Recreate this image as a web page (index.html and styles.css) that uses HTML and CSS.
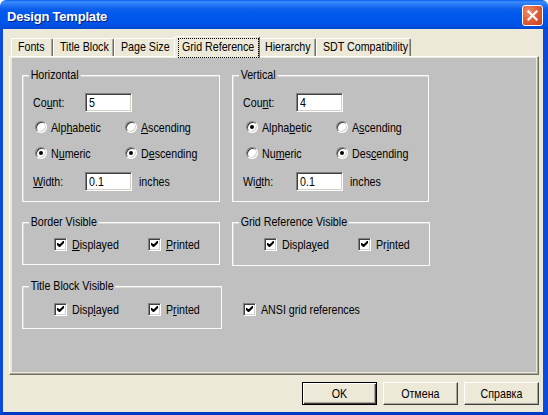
FILE: index.html
```html
<!DOCTYPE html>
<html>
<head>
<meta charset="utf-8">
<title>Design Template</title>
<link rel="stylesheet" href="styles.css">
</head>
<body>
<div class="window">
  <div class="titlebar">
    <span class="title">Design Template</span>
    <span class="close"><svg width="13" height="13" viewBox="0 0 13 13"><path d="M2.5 2.5 L10.5 10.5 M10.5 2.5 L2.5 10.5" stroke="#fff" stroke-width="2.2" stroke-linecap="square" fill="none"/></svg></span>
  </div>
  <div class="frame">
    <div class="client">
      <div class="tabs">
        <div class="tab t-fonts"><span class="tx">Fonts</span></div>
        <div class="tab t-title"><span class="tx">Title Block</span></div>
        <div class="tab t-page"><span class="tx">Page Size</span></div>
        <div class="tab active t-grid"><span class="focus"><span class="tx">Grid Reference</span></span></div>
        <div class="tab t-hier"><span class="tx">Hierarchy</span></div>
        <div class="tab t-sdt"><span class="tx">SDT Compatibility</span></div>
      </div>
      <div class="panel">
        <div class="page">
          <div class="group g-h">
            <span class="legend">Horizontal</span>
            <div class="field-row"><span class="lbl"><span class="tx">Co<u>u</u>nt:</span></span><span class="input"><span class="tx">5</span></span></div>
            <div class="radio-grid">
              <span class="ritem"><span class="radio"></span><span class="tx">Alp<u>h</u>abetic</span></span>
              <span class="ritem"><span class="radio"></span><span class="tx"><u>A</u>scending</span></span>
              <span class="ritem"><span class="radio on"></span><span class="tx">N<u>u</u>meric</span></span>
              <span class="ritem"><span class="radio on"></span><span class="tx">D<u>e</u>scending</span></span>
            </div>
            <div class="field-row width-row"><span class="lbl"><span class="tx"><u>W</u>idth:</span></span><span class="input"><span class="tx">0.1</span></span><span class="unit tx">inches</span></div>
          </div>
          <div class="group g-v">
            <span class="legend">Vertical</span>
            <div class="field-row"><span class="lbl"><span class="tx">Cou<u>n</u>t:</span></span><span class="input"><span class="tx">4</span></span></div>
            <div class="radio-grid">
              <span class="ritem"><span class="radio on"></span><span class="tx">Alpha<u>b</u>etic</span></span>
              <span class="ritem"><span class="radio"></span><span class="tx">A<u>s</u>cending</span></span>
              <span class="ritem"><span class="radio"></span><span class="tx">Nu<u>m</u>eric</span></span>
              <span class="ritem"><span class="radio on"></span><span class="tx">Des<u>c</u>ending</span></span>
            </div>
            <div class="field-row width-row"><span class="lbl"><span class="tx">Wi<u>d</u>th:</span></span><span class="input"><span class="tx">0.1</span></span><span class="unit tx">inches</span></div>
          </div>
          <div class="group checks g-bv">
            <span class="legend">Border Visible</span>
            <span class="citem"><span class="check"><svg width="7" height="7" viewBox="0 0 7 7"><path d="M0 2h1l1 1h1l3-3h1v2l-4 4h-1l-2-2z" fill="#000"/></svg></span><span class="tx"><u>D</u>isplayed</span></span>
            <span class="citem"><span class="check"><svg width="7" height="7" viewBox="0 0 7 7"><path d="M0 2h1l1 1h1l3-3h1v2l-4 4h-1l-2-2z" fill="#000"/></svg></span><span class="tx"><u>P</u>rinted</span></span>
          </div>
          <div class="group checks g-grv">
            <span class="legend">Grid Reference Visible</span>
            <span class="citem"><span class="check"><svg width="7" height="7" viewBox="0 0 7 7"><path d="M0 2h1l1 1h1l3-3h1v2l-4 4h-1l-2-2z" fill="#000"/></svg></span><span class="tx">Displa<u>y</u>ed</span></span>
            <span class="citem"><span class="check"><svg width="7" height="7" viewBox="0 0 7 7"><path d="M0 2h1l1 1h1l3-3h1v2l-4 4h-1l-2-2z" fill="#000"/></svg></span><span class="tx">Pr<u>i</u>nted</span></span>
          </div>
          <div class="group checks g-tbv">
            <span class="legend">Title Block Visible</span>
            <span class="citem"><span class="check"><svg width="7" height="7" viewBox="0 0 7 7"><path d="M0 2h1l1 1h1l3-3h1v2l-4 4h-1l-2-2z" fill="#000"/></svg></span><span class="tx">Disp<u>l</u>ayed</span></span>
            <span class="citem"><span class="check"><svg width="7" height="7" viewBox="0 0 7 7"><path d="M0 2h1l1 1h1l3-3h1v2l-4 4h-1l-2-2z" fill="#000"/></svg></span><span class="tx">P<u>r</u>inted</span></span>
          </div>
          <div class="ansi">
            <span class="citem"><span class="check"><svg width="7" height="7" viewBox="0 0 7 7"><path d="M0 2h1l1 1h1l3-3h1v2l-4 4h-1l-2-2z" fill="#000"/></svg></span><span class="tx">ANSI grid references</span></span>
          </div>
        </div>
      </div>
      <div class="buttons">
        <div class="btn default"><span class="tx">OK</span></div>
        <div class="btn"><span class="tx">Отмена</span></div>
        <div class="btn"><span class="tx">Справка</span></div>
      </div>
    </div>
  </div>
</div>
</body>
</html>
```

FILE: styles.css
```css
html, body {
  margin: 0;
  padding: 0;
}
body {
  width: 548px;
  height: 415px;
  overflow: hidden;
  background: #ffffff;
  font-family: "Liberation Sans", Arial, sans-serif;
  font-size: 13px;
  color: #000;
}
u { text-decoration: underline; text-underline-offset: 1px; }

/* narrow text: the dialog font is a condensed sans */
.tx {
  display: inline-block;
  transform: scaleX(0.82);
  transform-origin: 0 50%;
  white-space: nowrap;
}

.window {
  width: 548px;
  height: 415px;
  display: flex;
  flex-direction: column;
}

.titlebar {
  height: 29px;
  flex: none;
  display: flex;
  align-items: flex-start;
  justify-content: space-between;
  padding: 0 5px 0 7px;
  box-sizing: border-box;
  background: linear-gradient(180deg, #0A5FEF 0px, #3D8DFA 2px, #2A7BF6 4px, #0C5FEC 9px, #0058EE 14px, #0055EA 22px, #0050E2 26px, #0046D2 29px);
  border-radius: 6px 6px 0 0;
}
.title {
  color: #fff;
  font-weight: bold;
  font-size: 13px;
  letter-spacing: -0.2px;
  line-height: 29px;
  padding-top: 2px;
  text-shadow: 1px 1px 0 #0A1883;
}
.close {
  margin-top: 5px;
  width: 21px;
  height: 21px;
  box-sizing: border-box;
  border: 1px solid #fff;
  border-radius: 3px;
  background: radial-gradient(circle at 30% 30%, #F0906E 0%, #E0603A 45%, #C8401C 100%);
  display: flex;
  align-items: center;
  justify-content: center;
}
.close svg { display: block; }

.frame {
  flex: 1;
  display: flex;
  background: #0055E5;
  border-left: 3px solid #0A4BDD;
  border-right: 5px solid #0A4BDD;
  border-bottom: 3px solid #0039C2;
  box-sizing: border-box;
}
.client {
  flex: 1;
  background: #ECE9D8;
  padding: 7px 4px 7px 6px;
  display: flex;
  flex-direction: column;
}

/* tabs */
.tabs {
  height: 20px;
  display: flex;
  align-items: flex-end;
  padding-left: 2px;
  position: relative;
  z-index: 2;
}
.tab {
  box-sizing: border-box;
  height: 18px;
  border: 1px solid;
  border-color: #fff #716F64 transparent #fff;
  border-bottom: none;
  border-radius: 2px 2px 0 0;
  box-shadow: inset -1px 0 0 #ACA899;
  background: #ECE9D8;
  padding-left: 6px;
  line-height: 16px;
  white-space: nowrap;
  overflow: hidden;
}
.t-fonts { width: 42px; }
.t-title { width: 61px; }
.t-page { width: 62px; }
.t-grid { width: 86px; }
.t-hier { width: 58px; }
.t-sdt { width: 95px; }
.tab.active {
  height: 22px;
  margin: 0 -2px -2px -2px;
  padding: 1px 0 0 3px;
  position: relative;
  z-index: 3;
  line-height: 17px;
}
.focus {
  display: block;
  box-sizing: border-box;
  height: 20px;
  width: 81px;
  border: 1px dotted #000;
  padding-left: 3px;
  line-height: 16px;
}

/* panel */
.panel {
  box-sizing: border-box;
  height: 319px;
  border: 1px solid;
  border-color: #fff #716F64 #716F64 #fff;
  box-shadow: inset -1px -1px 0 #ACA899;
  background: #ECE9D8;
  padding: 1px 2px 2px 2px;
  position: relative;
  z-index: 1;
}
.page {
  height: 100%;
  background: #C0C0C0;
  box-sizing: border-box;
  padding: 17px 0 0 10px;
  display: grid;
  grid-template-columns: 210px auto;
  grid-template-rows: 127px 44px 43px;
  row-gap: 20px;
  align-items: start;
}

.group {
  position: relative;
  box-sizing: border-box;
  border: 1px solid #FAFAFA;
  box-shadow: inset 1px 1px 0 #D8D8D0;
}
.legend {
  position: absolute;
  top: -9px;
  left: 6px;
  padding: 0 2px;
  background: #C0C0C0;
  line-height: 16px;
  white-space: nowrap;
  transform: scaleX(0.82);
  transform-origin: 0 50%;
}
.g-h { width: 198px; height: 127px; padding: 17px 0 0 10px; }
.g-v { width: 197px; height: 127px; padding: 17px 0 0 10px; }
.g-v .lbl { width: 53px; }
.g-v .radio-grid { padding-left: 3px; }

.field-row {
  display: flex;
  align-items: center;
  height: 19px;
}
.lbl { width: 52px; flex: none; }
.input {
  box-sizing: border-box;
  width: 47px;
  height: 19px;
  background: #fff;
  border: 1px solid;
  border-color: #808080 #fff #fff #808080;
  box-shadow: inset 1px 1px 0 #404040, inset -1px -1px 0 #D4D0C8;
  padding-left: 3px;
  line-height: 17px;
  flex: none;
}
.unit { margin-left: 7px; }
.width-row { margin-top: 11px; }

.radio-grid {
  display: grid;
  grid-template-columns: 90px 90px;
  row-gap: 10px;
  margin-top: 7px;
  padding-left: 2px;
}
.ritem {
  display: flex;
  align-items: center;
  gap: 4px;
  height: 16px;
}
.radio {
  position: relative;
  box-sizing: border-box;
  width: 12px;
  height: 12px;
  border-radius: 50%;
  background: #fff;
  border: 1px solid;
  border-color: #808080 #fff #fff #808080;
  box-shadow: inset 1px 1px 0 #404040, inset -1px -1px 0 #D4D0C8;
  flex: none;
}
.radio.on::after {
  content: "";
  position: absolute;
  left: 3px;
  top: 3px;
  width: 4px;
  height: 4px;
  border-radius: 50%;
  background: #000;
}

.checks {
  display: grid;
  grid-template-columns: 94px auto;
  padding: 15px 0 0 31px;
}
.g-bv { width: 198px; height: 43px; }
.g-grv { width: 198px; height: 44px; }
.g-tbv { width: 200px; height: 43px; padding-top: 16px; }
.citem {
  display: flex;
  align-items: center;
  gap: 5px;
  height: 13px;
}
.check {
  box-sizing: border-box;
  width: 13px;
  height: 13px;
  background: #fff;
  border: 1px solid;
  border-color: #808080 #fff #fff #808080;
  box-shadow: inset 1px 1px 0 #404040, inset -1px -1px 0 #D4D0C8;
  display: flex;
  align-items: center;
  justify-content: center;
  flex: none;
}
.check svg { display: block; }
.ansi { padding: 17px 0 0 11px; }

/* buttons */
.buttons {
  display: flex;
  justify-content: flex-end;
  gap: 6px;
  margin-top: 7px;
}
.btn {
  box-sizing: border-box;
  width: 75px;
  height: 23px;
  border: 1px solid;
  border-color: #fff #404040 #404040 #fff;
  box-shadow: inset -1px -1px 0 #ACA899;
  background: #ECE9D8;
  text-align: center;
  line-height: 21px;
}
.btn .tx { transform-origin: 50% 50%; }
.btn.default {
  border-color: #000;
  box-shadow: inset 1px 1px 0 #fff, inset -1px -1px 0 #404040, inset -2px -2px 0 #ACA899;
}
```
